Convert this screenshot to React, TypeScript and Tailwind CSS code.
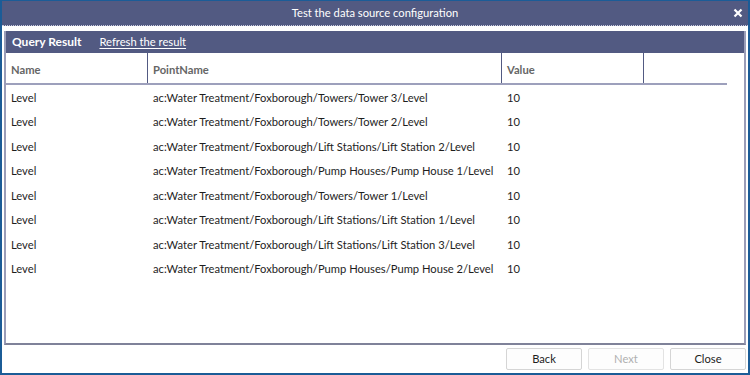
import React from 'react';

const rows: [string, string, string][] = [
  ['Level', 'ac:Water Treatment/Foxborough/Towers/Tower 3/Level', '10'],
  ['Level', 'ac:Water Treatment/Foxborough/Towers/Tower 2/Level', '10'],
  ['Level', 'ac:Water Treatment/Foxborough/Lift Stations/Lift Station 2/Level', '10'],
  ['Level', 'ac:Water Treatment/Foxborough/Pump Houses/Pump House 1/Level', '10'],
  ['Level', 'ac:Water Treatment/Foxborough/Towers/Tower 1/Level', '10'],
  ['Level', 'ac:Water Treatment/Foxborough/Lift Stations/Lift Station 1/Level', '10'],
  ['Level', 'ac:Water Treatment/Foxborough/Lift Stations/Lift Station 3/Level', '10'],
  ['Level', 'ac:Water Treatment/Foxborough/Pump Houses/Pump House 2/Level', '10'],
];

const App: React.FC = () => {
  return (
    <div
      className="w-[750px] h-[375px] flex flex-col bg-white border-2 border-t border-[#1b5c97] overflow-hidden text-[11.2px] text-[#1e1e1e]"
      style={{ fontFamily: 'Lato, "Open Sans", sans-serif' }}
    >
      {/* title bar */}
      <div className="h-[25px] shrink-0 bg-[#525a82] border-b border-dotted border-[#c9cbe0] flex items-center relative">
        <div className="flex-1 text-center text-white text-[11.2px]">Test the data source configuration</div>
        <svg className="absolute right-[5px] top-[7px]" width="10" height="10" viewBox="0 0 10 10">
          <path d="M1.5 1.5 L8.5 8.5 M8.5 1.5 L1.5 8.5" stroke="white" strokeWidth="2.2" />
        </svg>
      </div>

      {/* panel */}
      <div className="mt-[5px] mx-[2px] h-[314px] flex flex-col border-2 border-t-0 border-[#9a9db8] border-b-[#7f8299]">
        <div className="h-[22px] shrink-0 bg-[#525a82] flex items-center gap-[18px] px-[6px] text-white">
          <span className="font-bold text-[12px]">Query Result</span>
          <span className="underline underline-offset-2">Refresh the result</span>
        </div>
        <div className="flex h-[32px] shrink-0 mr-[17px] border-b-2 border-[#9da0bc] text-[#666] font-bold">
          <div className="w-[142px] pl-[5px] pt-[4px] flex items-center border-r border-[#525a82]">Name</div>
          <div className="w-[354px] pl-[5px] pt-[4px] flex items-center border-r border-[#525a82]">PointName</div>
          <div className="w-[142px] pl-[5px] pt-[4px] flex items-center border-r border-[#525a82]">Value</div>
          <div className="flex-1" />
        </div>
        <div className="flex flex-col pt-[1px]">
          {rows.map((r, i) => (
            <div key={i} className="flex h-[24.5px] items-center whitespace-nowrap">
              <div className="w-[142px] pl-[5px]">{r[0]}</div>
              <div className="w-[354px] pl-[5px]">{r[1]}</div>
              <div className="w-[142px] pl-[5px]">{r[2]}</div>
            </div>
          ))}
        </div>
      </div>

      {/* footer */}
      <div className="flex justify-end gap-[6px] pt-[3px] pr-[2px]">
        <button className="w-[76px] h-[22px] bg-[#fdfdfd] border border-[#d5d5d5] rounded-[2px] text-[#1e1e1e]">Back</button>
        <button className="w-[76px] h-[22px] bg-[#fdfdfd] border border-[#e3e3e3] rounded-[2px] text-[#b0b0b0]">Next</button>
        <button className="w-[76px] h-[22px] bg-[#fdfdfd] border border-[#d5d5d5] rounded-[2px] text-[#1e1e1e]">Close</button>
      </div>
    </div>
  );
};

export default App;
